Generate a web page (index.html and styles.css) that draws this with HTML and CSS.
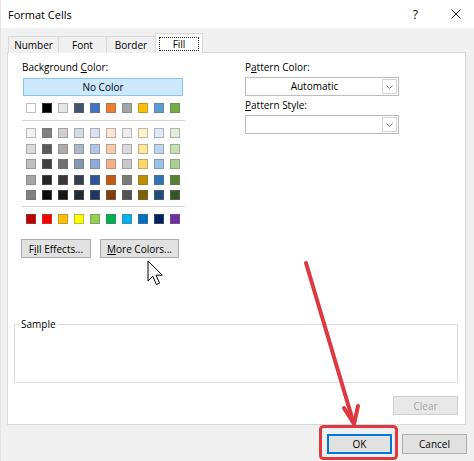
FILE: index.html
```html
<!DOCTYPE html>
<html>
<head>
<meta charset="utf-8">
<link rel="stylesheet" href="styles.css">
</head>
<body>
<div class="window">
  <div class="titlebar">
    <span class="title">Format Cells</span>
    <span class="help">?</span>
    <span class="close"><svg width="10" height="10" viewBox="0 0 10 10"><path d="M0.5 0.5 L9.5 9.5 M9.5 0.5 L0.5 9.5" stroke="#222" stroke-width="1" fill="none"/></svg></span>
  </div>
  <div class="tabs">
    <div class="tab t-number">Number</div>
    <div class="tab t-font">Font</div>
    <div class="tab t-border">Border</div>
    <div class="tab t-fill active"><span class="focus">Fill</span></div>
  </div>
  <div class="panel">
    <div class="top">
      <div class="leftcol">
        <div class="label">Background <u>C</u>olor:</div>
        <div class="nocolor">No Color</div>
        <div class="swrow first">
          <i style="background:#FFFFFF"></i><i style="background:#000000"></i><i style="background:#E7E6E6"></i><i style="background:#44546A"></i><i style="background:#4472C4"></i><i style="background:#ED7D31"></i><i style="background:#A5A5A5"></i><i style="background:#FFC000"></i><i style="background:#5B9BD5"></i><i style="background:#70AD47"></i>
        </div>
        <div class="sep"></div>
        <div class="theme">
          <div class="swrow"><i style="background:#F2F2F2"></i><i style="background:#808080"></i><i style="background:#D0CECE"></i><i style="background:#D6DCE4"></i><i style="background:#D9E1F2"></i><i style="background:#FCE4D6"></i><i style="background:#EDEDED"></i><i style="background:#FFF2CC"></i><i style="background:#DDEBF7"></i><i style="background:#E2EFDA"></i></div>
          <div class="swrow"><i style="background:#D9D9D9"></i><i style="background:#595959"></i><i style="background:#AEAAAA"></i><i style="background:#ACB9CA"></i><i style="background:#B4C6E7"></i><i style="background:#F8CBAD"></i><i style="background:#DBDBDB"></i><i style="background:#FFE699"></i><i style="background:#BDD7EE"></i><i style="background:#C6E0B4"></i></div>
          <div class="swrow"><i style="background:#BFBFBF"></i><i style="background:#404040"></i><i style="background:#757171"></i><i style="background:#8496B0"></i><i style="background:#8EA9DB"></i><i style="background:#F4B084"></i><i style="background:#C9C9C9"></i><i style="background:#FFD966"></i><i style="background:#9BC2E6"></i><i style="background:#A9D08E"></i></div>
          <div class="swrow"><i style="background:#A6A6A6"></i><i style="background:#262626"></i><i style="background:#3A3838"></i><i style="background:#333F4F"></i><i style="background:#305496"></i><i style="background:#C65911"></i><i style="background:#7B7B7B"></i><i style="background:#BF8F00"></i><i style="background:#2F75B5"></i><i style="background:#548235"></i></div>
          <div class="swrow"><i style="background:#808080"></i><i style="background:#0D0D0D"></i><i style="background:#171616"></i><i style="background:#222A35"></i><i style="background:#203764"></i><i style="background:#833C0C"></i><i style="background:#525252"></i><i style="background:#806000"></i><i style="background:#1F4E78"></i><i style="background:#375623"></i></div>
        </div>
        <div class="sep sep2"></div>
        <div class="swrow std">
          <i style="background:#C00000"></i><i style="background:#FF0000"></i><i style="background:#FFC000"></i><i style="background:#FFFF00"></i><i style="background:#92D050"></i><i style="background:#00B050"></i><i style="background:#00B0F0"></i><i style="background:#0070C0"></i><i style="background:#002060"></i><i style="background:#7030A0"></i>
        </div>
        <div class="btnrow">
          <div class="btn fill-eff">F<u>i</u>ll Effects...</div>
          <div class="btn more-col"><u>M</u>ore Colors...</div>
        </div>
      </div>
      <div class="rightcol">
        <div class="label">P<u>a</u>ttern Color:</div>
        <div class="dropdown"><span class="dd-text">Automatic</span><span class="dd-arrow"><svg width="7" height="4" viewBox="0 0 7 4"><path d="M0.5 0.5 L3.5 3.5 L6.5 0.5" stroke="#707070" fill="none" stroke-width="1"/></svg></span></div>
        <div class="label label2"><u>P</u>attern Style:</div>
        <div class="dropdown dd2"><span class="dd-text"></span><span class="dd-arrow"><svg width="7" height="4" viewBox="0 0 7 4"><path d="M0.5 0.5 L3.5 3.5 L6.5 0.5" stroke="#707070" fill="none" stroke-width="1"/></svg></span></div>
      </div>
    </div>
    <fieldset class="sample"><legend>Sample</legend><div class="sample-body"></div></fieldset>
    <div class="clear-row"><div class="btn disabled">Clear</div></div>
  </div>
  <div class="footer">
    <div class="btn ok">OK</div>
    <div class="btn">Cancel</div>
  </div>
  <svg class="overlay" width="474" height="461" viewBox="0 0 474 461">
    <line x1="305" y1="263" x2="352" y2="421" stroke="#dc3a40" stroke-width="4" stroke-linecap="round"/>
    <polyline points="343,408 353,424 357,406" stroke="#dc3a40" stroke-width="4" fill="none" stroke-linecap="round" stroke-linejoin="round"/>
    <rect x="319.5" y="426.5" width="76" height="32" rx="3" ry="3" stroke="#dc3a40" stroke-width="3" fill="none"/>
  </svg>
  <svg class="cursor" width="17" height="27" viewBox="0 0 17 27">
    <path d="M1 1 L1 21 L5.8 16.3 L9.4 24.5 L12.6 23.1 L9 15.2 L15.3 15.2 Z" fill="#fff" stroke="#000" stroke-width="1" stroke-linejoin="round"/>
  </svg>
</div>
</body>
</html>
```

FILE: styles.css
```css
* { box-sizing: border-box; }
html, body { margin: 0; padding: 0; }
body {
  font-family: "Open Sans", "Noto Sans", sans-serif;
  font-size: 10px;
  color: #000;
  background: #f0f0f0;
}
.window {
  position: relative;
  width: 474px;
  height: 461px;
  background: #f0f0f0;
  overflow: hidden;
  border-left: 1px solid #e4e4e4;
}
.titlebar {
  height: 28px;
  background: #fff;
  display: flex;
  align-items: center;
  padding-left: 7px;
}
.title { font-size: 11px; flex: 1; }
.help { font-size: 12px; margin-right: 33px; }
.close { width: 10px; height: 10px; margin-right: 13px; display: flex; }
.tabs {
  display: flex;
  align-items: flex-end;
  margin: 5px 0 -1px 7px;
  height: 20px;
  position: relative;
  z-index: 1;
}
.tab {
  height: 17px;
  border: 1px solid #d9d9d9;
  border-bottom: none;
  margin-right: -1px;
  display: flex;
  align-items: center;
  justify-content: center;
  background: #f0f0f0;
  line-height: 14px;
  padding-bottom: 1px;
}
.t-number { width: 51px; }
.t-font { width: 49px; }
.t-border { width: 50px; }
.t-fill { width: 48px; }
.tab.active {
  height: 20px;
  background: #fff;
  padding-bottom: 0;
}
.focus {
  display: block;
  width: 40px;
  height: 14px;
  border: 1px dotted #333;
  text-align: center;
  line-height: 12px;
}
.panel {
  margin-left: 6px;
  width: 459px;
  height: 373px;
  background: #fff;
  border: 1px solid #d9d9d9;
  display: flex;
  flex-direction: column;
}
.top {
  display: flex;
  padding: 7px 0 0 14px;
}
.leftcol { width: 164px; }
.rightcol { width: 154px; margin-left: 59px; }
.label { height: 14px; line-height: 14px; }
.nocolor {
  margin: 4px 0 0 1px;
  width: 160px;
  height: 18px;
  background: #cce8ff;
  border: 1px solid #8cc4f0;
  text-align: center;
  line-height: 16px;
}
.swrow {
  display: flex;
  gap: 6px;
  padding-left: 4px;
}
.swrow i {
  display: block;
  width: 10px;
  height: 10px;
  border: 1px solid rgba(110,110,110,0.45);
}
.swrow.first { margin-top: 7px; }
.sep {
  height: 1px;
  background: #d6d6d6;
  margin-top: 7px;
  width: 163px;
}
.theme {
  margin-top: 7px;
  display: flex;
  flex-direction: column;
  gap: 5.5px;
}
.sep2 { margin-top: 6px; }
.swrow.std { margin-top: 7px; }
.btnrow {
  display: flex;
  gap: 9px;
  margin-top: 15px;
  margin-left: -1px;
}
.btn {
  height: 19px;
  background: #e1e1e1;
  border: 1px solid #adadad;
  display: flex;
  align-items: center;
  justify-content: center;
  line-height: 14px;
}
.fill-eff { width: 70px; }
.more-col { width: 79px; }
.dropdown {
  margin-top: 3px;
  height: 19px;
  border: 1px solid #bcbcbc;
  background: #fff;
  display: flex;
  align-items: stretch;
  padding: 1px;
}
.dd-text { flex: 1; text-align: center; line-height: 15px; }
.dd-arrow {
  width: 15px;
  border: 1px solid #d4d4d4;
  display: flex;
  align-items: center;
  justify-content: center;
  background: #fff;
}
.label2 { margin-top: 2px; }
.sample {
  margin: 59px 0 0 6px;
  padding: 0;
  width: 444px;
  border: 1px solid #dcdcdc;
  min-width: 0;
}
.sample legend {
  margin-left: 4px;
  padding: 0 2px;
  line-height: 14px;
}
.sample-body { height: 51px; }
.clear-row {
  display: flex;
  justify-content: flex-end;
  padding-right: 7px;
  margin-top: 13px;
}
.btn.disabled {
  width: 65px;
  background: #e8e8e8;
  border-color: #cfcfcf;
  color: #a3a3a3;
}
.footer {
  display: flex;
  justify-content: flex-end;
  gap: 10px;
  padding: 9px 7px 0 0;
}
.footer .btn { width: 65px; height: 20px; }
.btn.ok {
  border-color: #0078d7;
  box-shadow: inset 0 0 0 1px #0078d7;
}
.overlay {
  position: absolute;
  left: 0;
  top: 0;
  pointer-events: none;
}
.cursor {
  position: absolute;
  left: 146px;
  top: 260px;
  pointer-events: none;
}
```
